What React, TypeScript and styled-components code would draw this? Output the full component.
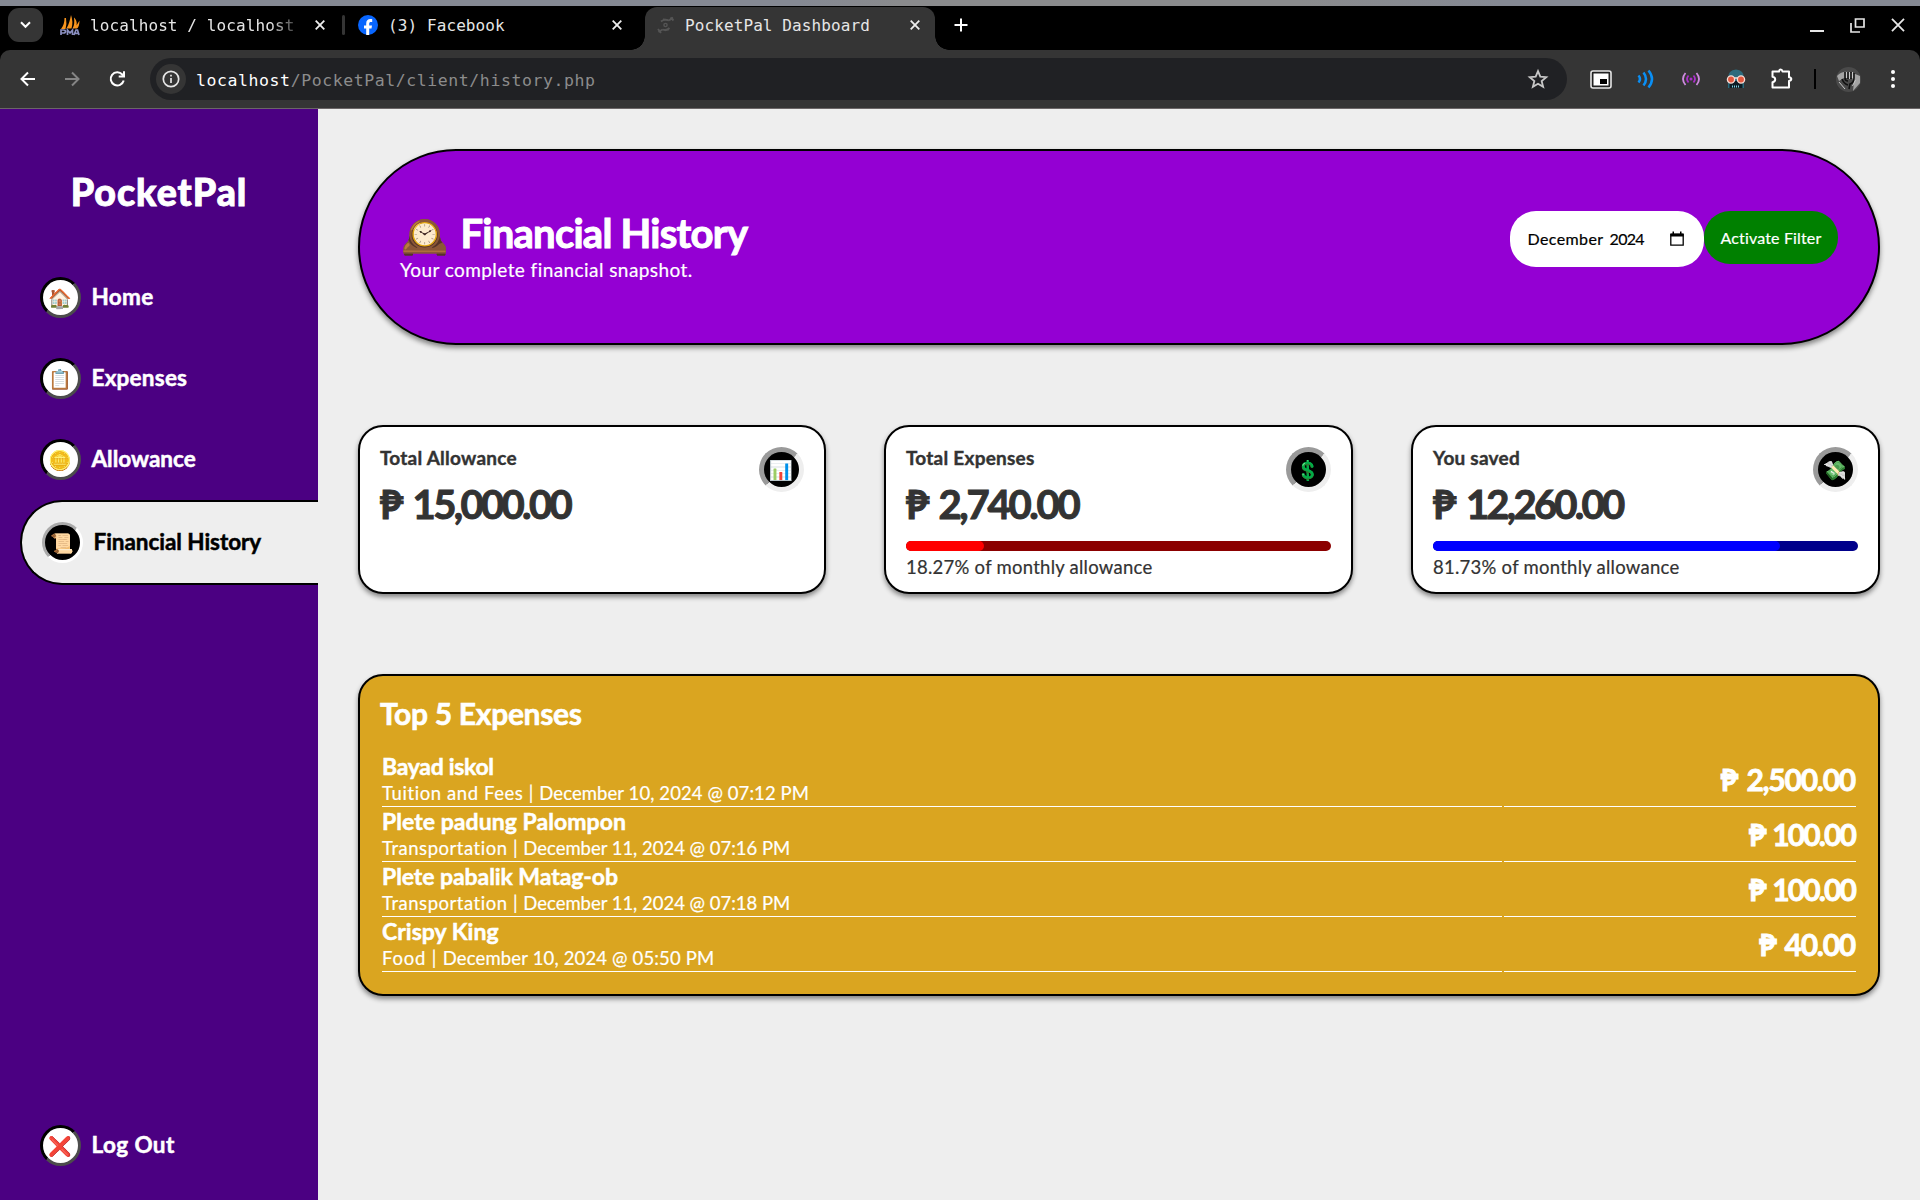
import React from "react";
import styled, { createGlobalStyle } from "styled-components";

const sans = `Lato, "Open Sans", "Noto Color Emoji", sans-serif`;
const mono = `"DejaVu Sans Mono", "Liberation Mono", monospace`;

const Global = createGlobalStyle`
  *, *::before, *::after { box-sizing: border-box; }
  body { margin: 0; background: #eeeeee; overflow: hidden; }
`;

const Screen = styled.div`
  width: 1920px;
  height: 1200px;
  display: flex;
  flex-direction: column;
  overflow: hidden;
  font-family: ${sans};
`;

/* ---------- browser window ---------- */
const DesktopEdge = styled.div`
  height: 6px;
  flex: none;
  background: linear-gradient(90deg, #858993 0 800px, #8a8b8d 900px 1300px, #858993 1500px);
`;
const TabStrip = styled.div`
  height: 44px;
  flex: none;
  background: #000;
  display: flex;
  align-items: center;
  padding: 0 15px 0 8px;
  font: 16px ${mono};
  letter-spacing: 0.1px;
  color: #e6e6e6;
`;
const TabMenu = styled.div`
  width: 35px;
  height: 34px;
  border-radius: 11px;
  background: #353535;
  display: grid;
  place-items: center;
  margin: 0 17px 6px 0;
`;
const Tab = styled.div<{ $width: number }>`
  width: ${(p) => p.$width}px;
  height: 38px;
  display: flex;
  align-items: center;
  margin-bottom: 6px;
  svg { flex: none; }
`;
const TabTitle = styled.span<{ $fade?: boolean }>`
  flex: 1;
  margin-left: 10px;
  padding-top: 1px;
  white-space: pre;
  overflow: hidden;
  line-height: 24px;
  ${(p) => p.$fade && "mask-image: linear-gradient(90deg, #000 180px, rgba(0,0,0,.25) 206px);"}
`;
const TabDivider = styled.div`
  width: 3px;
  height: 20px;
  border-radius: 2px;
  background: #353535;
  margin: 0 13px 6px 17px;
`;
const ActiveTab = styled.div`
  position: relative;
  width: 290px;
  height: 43px;
  margin: 1px 0 0 23px;
  border-radius: 12px 12px 0 0;
  background: #353535;
  display: flex;
  align-items: center;
  padding: 0 15px 7px 12px;
  &::before, &::after {
    content: "";
    position: absolute;
    bottom: 0;
    width: 14px;
    height: 14px;
  }
  &::before { left: -14px; background: radial-gradient(circle at 0 0, transparent 13.5px, #353535 14px); }
  &::after { right: -14px; background: radial-gradient(circle at 100% 0, transparent 13.5px, #353535 14px); }
`;
const NewTab = styled.div`
  margin: 0 auto 6px 19px;
  display: flex;
`;
const WindowButtons = styled.div`
  display: flex;
  gap: 26px;
  margin-bottom: 5px;
`;
const ToolbarBack = styled.div`
  background: #000;
  height: 59px;
  flex: none;
`;
const Toolbar = styled.div`
  height: 59px;
  background: #353535;
  border-bottom: 1px solid #6b6667;
  border-radius: 10px 10px 0 0;
  display: flex;
  align-items: center;
  padding: 0 17px 0 18px;
`;
const NavButtons = styled.div`
  display: flex;
  gap: 25px;
  width: 132px;
`;
const Address = styled.div`
  width: 1417px;
  height: 42px;
  border-radius: 21px;
  background: #202124;
  display: flex;
  align-items: center;
  padding: 0 18px 0 6px;
  font: 16.5px ${mono};
  letter-spacing: 0.58px;
  color: #8c8c8c;
`;
const InfoBadge = styled.span`
  width: 30px;
  height: 30px;
  border-radius: 50%;
  background: #353535;
  display: grid;
  place-items: center;
`;
const Url = styled.span`
  flex: 1;
  margin-left: 10px;
  padding-top: 2px;
  b { color: #fff; font-weight: 400; }
`;
const Extensions = styled.div`
  display: flex;
  align-items: center;
  margin-left: 22.5px;
  gap: 23px;
`;
const ToolDivider = styled.div`
  width: 2px;
  height: 20px;
  background: #000;
  margin: 0 20px 0 21px;
`;
const MenuDots = styled.svg`
  margin-left: auto;
`;

/* ---------- page ---------- */
const Page = styled.div`
  flex: 1;
  display: flex;
  min-height: 0;
  -webkit-text-stroke: 0.2px;
`;
const Sidebar = styled.aside`
  width: 318px;
  flex: none;
  background: #4b0082;
  display: flex;
  flex-direction: column;
  padding-bottom: 14px;
`;
const Logo = styled.h1`
  margin: 57px 0 40px;
  font-size: 37.5px;
  font-weight: 900;
  line-height: 52px;
  height: 51px;
  letter-spacing: 1px;
  text-align: center;
  color: #fff;
  -webkit-text-stroke: 0.9px;
`;
const NavItem = styled.a<{ $active?: boolean; $bottom?: boolean }>`
  display: flex;
  align-items: center;
  gap: 10.5px;
  height: ${(p) => (p.$active ? 85 : 81)}px;
  padding-left: ${(p) => (p.$active ? 20 : 40)}px;
  margin-top: ${(p) => (p.$bottom ? "auto" : 0)};
  ${(p) =>
    p.$active
      ? "margin-left: 20px; background: #eee; color: #000; border: 2px solid #000; border-right: 0; border-radius: 42px 0 0 42px;"
      : "color: #fff;"}
`;
const NavIcon = styled.span<{ $active?: boolean }>`
  width: 41px;
  height: 41px;
  border-radius: 50%;
  border: 3px solid;
  border-color: ${(p) => (p.$active ? "#aaa #fff #fff #aaa" : "#000 #4c4c4c #4c4c4c #000")};
  background: ${(p) => (p.$active ? "#000" : "#fff")};
  display: flex;
  align-items: center;
  justify-content: center;
  font-size: 19px;
  line-height: 35px;
`;
const NavText = styled.span<{ $track: number }>`
  font-size: 22.5px;
  font-weight: 700;
  padding-bottom: 2.5px;
  letter-spacing: ${(p) => p.$track}px;
  -webkit-text-stroke: 0.5px;
`;
const Main = styled.main`
  flex: 1;
  padding: 40px;
  display: flex;
  flex-direction: column;
  gap: 80px;
`;
const Panel = styled.section`
  border: 2px solid #000;
  box-shadow: 0 3px 5px rgba(0, 0, 0, 0.45);
`;
const Banner = styled(Panel)`
  height: 196px;
  flex: none;
  border-radius: 98px;
  background: #9400d3;
  color: #fff;
  padding: 60px 40px;
  display: flex;
  justify-content: space-between;
  align-items: flex-start;
`;
const BannerTitle = styled.h2`
  margin: 0;
  display: flex;
  height: 43px;
  font-size: 40px;
  line-height: 45px;
  letter-spacing: -0.75px;
  -webkit-text-stroke: 1px;
`;
const ClockEmoji = styled.span`
  width: 60.5px;
  padding-left: 1px;
  font-size: 38px;
  font-weight: 400;
  letter-spacing: 0;
  line-height: 47px;
  height: 43px;
`;
const Subtitle = styled.p`
  margin: 0;
  font-size: 19px;
  line-height: 31px;
  letter-spacing: 0.43px;
`;
const Filter = styled.form`
  display: flex;
  align-items: flex-start;
`;
const MonthField = styled.div`
  width: 194px;
  height: 56px;
  border-radius: 26px;
  background: #fff;
  color: #000;
  font-size: 16px;
  display: flex;
  align-items: center;
  padding: 0 20px 2px 17.5px;
  letter-spacing: 0.4px;
  svg { margin: 2px 0 0 auto; }
`;
const Year = styled.span`
  margin-left: 6px;
  letter-spacing: -0.7px;
`;
const FilterButton = styled.button`
  width: 134px;
  height: 53px;
  border: 0;
  border-radius: 26px;
  background: #008000;
  color: #fff;
  font: 16px ${sans};
  letter-spacing: 0.15px;
  padding: 0 0 1px;
  -webkit-text-stroke: 0.2px;
`;
const Cards = styled.div`
  display: grid;
  grid-template-columns: 468px 469px 469px;
  gap: 58px;
`;
const Card = styled(Panel)`
  height: 169px;
  border-radius: 25px;
  background: #fff;
  color: #333;
  padding: 20px 20px 0;
`;
const CardTop = styled.div`
  display: flex;
  justify-content: space-between;
  height: 91px;
`;
const CardTitle = styled.div`
  font-size: 19px;
  font-weight: 700;
  line-height: 21px;
  letter-spacing: 0.24px;
  -webkit-text-stroke: 0.4px;
`;
const CardAmount = styled.div<{ $track: number; $gap: number }>`
  font-size: 40px;
  font-weight: 700;
  line-height: 72px;
  white-space: nowrap;
  letter-spacing: ${(p) => p.$track}px;
  word-spacing: ${(p) => p.$gap}px;
  -webkit-text-stroke: 1px;
`;
const CardIcon = styled.span`
  width: 45px;
  height: 45px;
  border-radius: 50%;
  border: 5px solid;
  border-color: #9a9a9a #eee #eee #9a9a9a;
  background: #000;
  display: flex;
  align-items: center;
  justify-content: center;
  font-size: 19px;
  line-height: 35px;
`;
const Track = styled.div<{ $color: string }>`
  height: 10px;
  margin-top: 3px;
  border-radius: 5px;
  background: ${(p) => p.$color};
`;
const Fill = styled.div<{ $color: string }>`
  height: 10px;
  border-radius: 5px;
  background: ${(p) => p.$color};
`;
const Caption = styled.div`
  font-size: 18.5px;
  line-height: 33px;
  letter-spacing: 0.25px;
`;
const Expenses = styled(Panel)`
  height: 322px;
  border-radius: 25px;
  background: #daa520;
  color: #fff;
  padding: 20px;
`;
const ExpensesTitle = styled.h3`
  margin: 0 0 22px;
  font-size: 30px;
  line-height: 34px;
  letter-spacing: -0.3px;
  -webkit-text-stroke: 0.6px;
`;
const Table = styled.table`
  width: 100%;
  border-spacing: 2px;
  table-layout: fixed;
`;
const Cell = styled.td`
  height: 53px;
  padding: 0;
  border-bottom: 1px solid #fff;
`;
const Name = styled.div<{ $track: number }>`
  font-size: 23px;
  font-weight: 700;
  line-height: 25px;
  letter-spacing: ${(p) => p.$track}px;
  -webkit-text-stroke: 0.5px;
`;
const Detail = styled.div`
  height: 27px;
  font-size: 18.5px;
  line-height: 29px;
`;
const DetailPart = styled.span<{ $track: number }>`
  letter-spacing: ${(p) => p.$track}px;
`;
const AmountCell = styled(Cell)<{ $track: number; $gap: number }>`
  width: 352px;
  text-align: right;
  padding: 0 1px 2px 0;
  font-size: 30px;
  font-weight: 700;
  line-height: 36px;
  letter-spacing: ${(p) => p.$track}px;
  word-spacing: ${(p) => p.$gap}px;
  -webkit-text-stroke: 0.8px;
`;

const Cross = ({ size = 10, color = "#eee" }: { size?: number; color?: string }) => (
  <svg width={size} height={size} viewBox="0 0 10 10" stroke={color} strokeWidth={18 / size}>
    <path d="M.7 .7L9.3 9.3M9.3 .7L.7 9.3" />
  </svg>
);
const AdminIcon = () => (
  <svg width="20" height="21" viewBox="0 0 20 21">
    <path d="M1 14C3.500 11 4.500 7 4.500 3l1.500 0q1 6-.5 11zM6.500 13.500C9 9 10 5 11 0q2.500 7 .5 13.500zM12.500 13.500c2-3 2-7 1.500-11 3 3 3 6 2.500 8l3-5c0 4-1 7-2.500 8z" fill="#f7941d" />
    <path d="M1 20v-5h2.500q2 0 2 1.500t-2 1.500H1M7.500 20v-5l2.500 3 2.500-3v5M14 20l2-5 1.500 0L19 20M14.500 18.300h4" fill="none" stroke="#8a8fc0" strokeWidth="1.700" />
  </svg>
);
const FacebookIcon = () => (
  <svg width="20" height="20" viewBox="0 0 20 20">
    <circle cx="10" cy="10" r="10" fill="#0866ff" />
    <path d="M8.200 20v-6.600H6v-3h2.200V8.700c0-3.200 1.500-4.700 4.300-4.700.6 0 1.300.1 1.700.2v2.700h-1.200c-1.400 0-1.800.6-1.800 1.800v1.700H14l-.5 3h-2.300V20z" fill="#fff" />
  </svg>
);
const PalIcon = () => (
  <svg width="18" height="18" viewBox="0 0 18 18" fill="none" stroke="#555" strokeWidth="1.800">
    <path d="M4 5.500Q7 3 12 4.500M6 3.500q3 0 5 .5M12 4.500l4-3M1.500 16l4-2.500M5.500 13.500q4 1.500 7-1.500M8 14.500l4-1" />
    <circle cx="8.500" cy="9" r="1.600" strokeWidth="1.400" />
    <path d="M13.500 1.500l3 3M1 13l3 4" />
  </svg>
);

const cards = [
  { title: "Total Allowance", amount: "₱ 15,000.00", track: -2.65, gap: 5, icon: "📊" },
  { title: "Total Expenses", amount: "₱ 2,740.00", track: -2.25, gap: 4, icon: "💲", pct: 18.27, fill: "#ff0000", base: "#8b0000" },
  { title: "You saved", amount: "₱ 12,260.00", track: -2.75, gap: 5.5, icon: "💸", pct: 81.73, fill: "#0000ff", base: "#00008b" },
];
const expenses = [
  { name: "Bayad iskol", nt: -0.3, kind: "Tuition and Fees", kt: 0.58, when: "December 10, 2024 @ 07:12 PM", wt: 0.08, amount: "₱ 2,500.00", at: -1.25, gap: 3.4 },
  { name: "Plete padung Palompon", nt: 0.05, kind: "Transportation", kt: 0.53, when: "December 11, 2024 @ 07:16 PM", wt: -0.02, amount: "₱ 100.00", at: -1.9, gap: 2.5 },
  { name: "Plete pabalik Matag-ob", nt: -0.07, kind: "Transportation", kt: 0.53, when: "December 11, 2024 @ 07:18 PM", wt: -0.02, amount: "₱ 100.00", at: -1.9, gap: 2.5 },
  { name: "Crispy King", nt: 0.03, kind: "Food", kt: 0.8, when: "December 10, 2024 @ 05:50 PM", wt: 0.15, amount: "₱ 40.00", at: -1.25, gap: 3 },
];
const nav = [
  { label: "Home", icon: "🏠", track: 0.35 },
  { label: "Expenses", icon: "📋", track: 0.22 },
  { label: "Allowance", icon: "🪙", track: 0 },
  { label: "Financial History", icon: "📜", track: -0.05, active: true },
  { label: "Log Out", icon: "❌", track: 0.4, bottom: true },
];

function Browser() {
  return (
    <>
      <DesktopEdge />
      <TabStrip>
        <TabMenu>
          <svg width="11" height="8" viewBox="0 0 11 8" fill="none" stroke="#fff" strokeWidth="2"><path d="M1 1.200l4.500 4.600L10 1.200" /></svg>
        </TabMenu>
        <Tab $width={265}>
          <AdminIcon />
          <TabTitle $fade>localhost / localhost</TabTitle>
          <Cross />
        </Tab>
        <TabDivider />
        <Tab $width={264}>
          <FacebookIcon />
          <TabTitle>(3) Facebook</TabTitle>
          <Cross />
        </Tab>
        <ActiveTab>
          <PalIcon />
          <TabTitle>PocketPal Dashboard</TabTitle>
          <Cross />
        </ActiveTab>
        <NewTab>
          <svg width="14" height="14" viewBox="0 0 14 14" stroke="#fff" strokeWidth="2"><path d="M7 .5v13M.5 7h13" /></svg>
        </NewTab>
        <WindowButtons>
          <svg width="14" height="15" viewBox="0 0 14 15" stroke="#e6e6e6" strokeWidth="2"><path d="M0 13h14" /></svg>
          <svg width="15" height="15" viewBox="0 0 15 15" fill="none" stroke="#e6e6e6" strokeWidth="1.700"><path d="M5.500 1h8.500v8h-8.500zM1 5v9h9" /></svg>
          <Cross size={14} color="#e6e6e6" />
        </WindowButtons>
      </TabStrip>
      <ToolbarBack>
        <Toolbar>
          <NavButtons>
            <svg width="20" height="20" viewBox="0 0 20 20" fill="none" stroke="#fff" strokeWidth="2"><path d="M17 10H3.500M10 3.500L3.500 10l6.500 6.500" /></svg>
            <svg width="20" height="20" viewBox="0 0 20 20" fill="none" stroke="#858585" strokeWidth="2"><path d="M2 10h13.500M9 3.500l6.500 6.500L9 16.500" /></svg>
            <svg width="20" height="20" viewBox="0 0 20 20" fill="none" stroke="#fff" strokeWidth="2"><path d="M15.700 11.500A6.600 6.600 0 1 1 14.300 5.500L15.800 7M16 2.200v5.300H10.700" /></svg>
          </NavButtons>
          <Address>
            <InfoBadge>
              <svg width="18" height="18" viewBox="0 0 18 18" fill="none" stroke="#e6e6e6" strokeWidth="1.700"><circle cx="9" cy="9" r="7.700" /><path d="M9 8v5M9 4.800v1.800" /></svg>
            </InfoBadge>
            <Url><b>localhost</b>/PocketPal/client/history.php</Url>
            <svg width="22" height="22" viewBox="0 0 24 24" fill="none" stroke="#c7c7c7" strokeWidth="2"><path d="M12 3.500l2.500 6 6.500.5-5 4.300 1.600 6.300L12 17.200l-5.600 3.400L8 14.300 3 10l6.500-.5z" /></svg>
          </Address>
          <Extensions>
            <svg width="22" height="19" viewBox="0 0 22 19"><rect x="1" y="1" width="20" height="17" rx="2" fill="#222" stroke="#e6e6e6" strokeWidth="1.600" /><rect x="3.500" y="3.500" width="15" height="12" fill="#fff" /><rect x="10" y="9" width="7" height="5" fill="#000" /></svg>
            <svg width="22" height="20" viewBox="0 0 22 20" fill="none" stroke="#0a8ff5" strokeWidth="2.500"><path d="M3.500 6.500q3 3.500 0 7M8.500 3.500q5 6.500 0 13M13.500 1.500q7 8.500 0 17" /></svg>
            <svg width="22" height="20" viewBox="0 0 22 20" fill="none" stroke="#ab2fc9" strokeWidth="1.800"><path d="M5.500 4Q.5 10 5.500 16M16.500 4q5 6 0 12" stroke="#cf8be0" /><path d="M8.500 6.500q-3 3.500 0 7M13.500 6.500q3 3.500 0 7" /><circle cx="11" cy="10" r="1.500" fill="#ab2fc9" stroke="none" /></svg>
            <svg width="22" height="20" viewBox="0 0 22 20"><path d="M3 19V9q0-8 8-8.500Q19 1 19 9v10z" fill="#2c6b7d" /><path d="M4.500 12h13v7h-13z" fill="#0c1c24" /><path d="M7 17.500h8" stroke="#7fd0e0" strokeWidth="2" strokeDasharray="1 1" /><g fill="#e2583e" stroke="#f7ddd6" strokeWidth="1.300"><circle cx="6" cy="10.500" r="3.600" /><circle cx="16" cy="10.500" r="3.600" /></g><path d="M9 9h4" stroke="#f7ddd6" strokeWidth="1.500" /></svg>
            <svg width="23" height="22" viewBox="0 0 23 22" fill="none" stroke="#fff" strokeWidth="2" strokeLinejoin="round"><path d="M2.500 3.500h6.500q.3-2 1.700-2t1.800 2h6.500v5.700q2.300.3 2.300 1.800t-2.300 2v6.500H2.500v-5.300q2.700-.5 2.700-2.700t-2.700-2.700z" /></svg>
          </Extensions>
          <ToolDivider />
          <svg width="25" height="25" viewBox="0 0 25 25"><circle cx="12.500" cy="12.500" r="12.500" fill="#4a4a4a" /><path d="M1 9q5-5 11-4t12 4l0 7-7 8 1-9-2-4-8 0-5 3z" fill="#a3a3a3" /><path d="M9 5v6q0 3 3 3M12 5v7M15 5v7M18 6v5q0 5-4 6l-1 5M6 12q2 5 6 6" fill="none" stroke="#111" strokeWidth="1.600" /><path d="M10.500 5v6M13.500 5v7M16.500 5v6M19.500 13l-3 6M3 15l6 7" stroke="#c9c9c9" strokeWidth="1" /></svg>
          <MenuDots width="20" height="20" viewBox="0 0 20 20" fill="#fff"><circle cx="10" cy="3" r="2" /><circle cx="10" cy="10" r="2" /><circle cx="10" cy="17" r="2" /></MenuDots>
        </Toolbar>
      </ToolbarBack>
    </>
  );
}

export default function App() {
  return (
    <Screen>
      <Global />
      <Browser />
      <Page>
        <Sidebar>
          <Logo>PocketPal</Logo>
          {nav.map((n) => (
            <NavItem key={n.label} $active={n.active} $bottom={n.bottom}>
              <NavIcon $active={n.active}>{n.icon}</NavIcon>
              <NavText $track={n.track}>{n.label}</NavText>
            </NavItem>
          ))}
        </Sidebar>
        <Main>
          <Banner>
            <div>
              <BannerTitle><ClockEmoji>🕰️</ClockEmoji>Financial History</BannerTitle>
              <Subtitle>Your complete financial snapshot.</Subtitle>
            </div>
            <Filter>
              <MonthField>
                <span>December</span><Year>2024</Year>
                <svg width="14" height="16" viewBox="0 0 14 16"><path d="M.8 3.500h12.400v10.700H.8z" fill="none" stroke="#000" strokeWidth="1.300" /><path d="M.5 2.500h13V5.500H.5zM2.500 .5h1.500V3H2.500zM10 .5h1.500V3H10z" /></svg>
              </MonthField>
              <FilterButton type="button">Activate Filter</FilterButton>
            </Filter>
          </Banner>
          <Cards>
            {cards.map((c) => (
              <Card key={c.title}>
                <CardTop>
                  <div>
                    <CardTitle>{c.title}</CardTitle>
                    <CardAmount $track={c.track} $gap={c.gap}>{c.amount}</CardAmount>
                  </div>
                  <CardIcon>{c.icon}</CardIcon>
                </CardTop>
                {c.pct && (
                  <>
                    <Track $color={c.base!}><Fill $color={c.fill!} style={{ width: `${c.pct}%` }} /></Track>
                    <Caption>{c.pct}% of monthly allowance</Caption>
                  </>
                )}
              </Card>
            ))}
          </Cards>
          <Expenses>
            <ExpensesTitle>Top 5 Expenses</ExpensesTitle>
            <Table>
              <tbody>
                {expenses.map((e) => (
                  <tr key={e.name}>
                    <Cell>
                      <Name $track={e.nt}>{e.name}</Name>
                      <Detail>
                        <DetailPart $track={e.kt}>{e.kind} | </DetailPart>
                        <DetailPart $track={e.wt}>{e.when}</DetailPart>
                      </Detail>
                    </Cell>
                    <AmountCell $track={e.at} $gap={e.gap}>{e.amount}</AmountCell>
                  </tr>
                ))}
              </tbody>
            </Table>
          </Expenses>
        </Main>
      </Page>
    </Screen>
  );
}
